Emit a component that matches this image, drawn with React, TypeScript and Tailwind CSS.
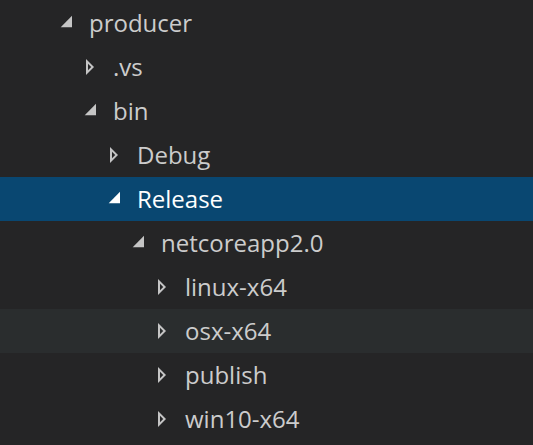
type Node = { name: string; level: number; open: boolean; selected?: boolean; hover?: boolean };

const rows: Node[] = [
  { name: 'producer', level: 0, open: true },
  { name: '.vs', level: 1, open: false },
  { name: 'bin', level: 1, open: true },
  { name: 'Debug', level: 2, open: false },
  { name: 'Release', level: 2, open: true, selected: true },
  { name: 'netcoreapp2.0', level: 3, open: true },
  { name: 'linux-x64', level: 4, open: false },
  { name: 'osx-x64', level: 4, open: false, hover: true },
  { name: 'publish', level: 4, open: false },
  { name: 'win10-x64', level: 4, open: false },
];

function Twistie({ open, light }: { open: boolean; light?: boolean }) {
  const fill = light ? '#ffffff' : '#c5c5c5';
  return (
    <svg width="32" height="32" viewBox="0 0 16 16" className="shrink-0">
      {open ? (
        <path d="M11 10.07H5.344L11 4.414v5.656z" fill={fill} />
      ) : (
        <path d="M6 4v8l4-4-4-4zm1 2.414L8.586 8 7 9.586V6.414z" fill={fill} />
      )}
    </svg>
  );
}

export default function App() {
  return (
    <div className="w-[533px] h-[445px] overflow-hidden bg-[#252526] pt-[1px] font-['Open_Sans',sans-serif] text-[24px]">
      {rows.map((r) => (
        <div
          key={r.name}
          className={
            'flex items-center h-[44px] leading-[44px] ' +
            (r.selected ? 'bg-[#094771] text-white' : r.hover ? 'bg-[#2a2d2e] text-[#cccccc]' : 'text-[#cccccc]')
          }
          style={{ paddingLeft: 50 + 24 * r.level }}
        >
          <Twistie open={r.open} light={r.selected} />
          <span className="ml-[7px] whitespace-nowrap">{r.name}</span>
        </div>
      ))}
    </div>
  );
}
